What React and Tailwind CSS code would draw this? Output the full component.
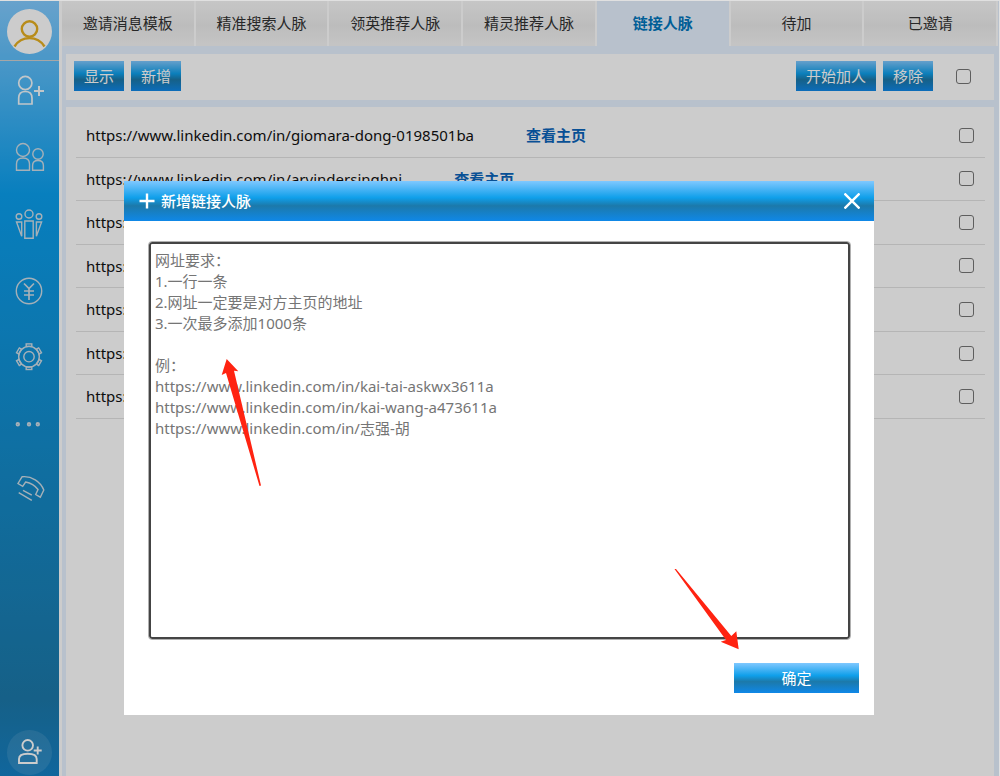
import React, { useState } from "react";

const tabs = [
  "邀请消息模板",
  "精准搜索人脉",
  "领英推荐人脉",
  "精灵推荐人脉",
  "链接人脉",
  "待加",
  "已邀请",
];

const links = [
  "https://www.linkedin.com/in/giomara-dong-0198501ba",
  "https://www.linkedin.com/in/arvindersinghni",
  "https://www.linkedin.com/in/",
  "https://www.linkedin.com/in/",
  "https://www.linkedin.com/in/",
  "https://www.linkedin.com/in/",
  "https://www.linkedin.com/in/",
];

const placeholder = `网址要求：
1.一行一条
2.网址一定要是对方主页的地址
3.一次最多添加1000条

例：
https://www.linkedin.com/in/kai-tai-askwx3611a
https://www.linkedin.com/in/kai-wang-a473611a
https://www.linkedin.com/in/志强-胡`;

const menu = [
  {
    label: "加人",
    active: true,
    icon: (
      <>
        <circle cx="25.3" cy="22" r="6.6" />
        <path d="M18.7 43V37Q18.7 30.5 25.3 30.5Q32 30.5 32 37V43Z" />
        <path d="M39 25V35M34 30H44" strokeWidth="2" />
      </>
    ),
  },
  {
    label: "人脉",
    icon: (
      <>
        <circle cx="23" cy="23" r="6.5" />
        <path d="M16.5 43.3V37Q16.5 31 23 31Q29.5 31 29.5 37V43.3Z" />
        <circle cx="38" cy="27" r="5.2" />
        <path d="M32.6 43.3V38.5Q32.6 33.5 38 33.5Q43.4 33.5 43.4 38.5V43.3Z" />
      </>
    ),
  },
  {
    label: "群组",
    icon: (
      <>
        <circle cx="29" cy="20" r="4" />
        <circle cx="19" cy="22.5" r="2.8" />
        <circle cx="39" cy="22.5" r="2.8" />
        <path d="M24.8 27H33.2V44.3H24.8ZM16.5 28H21.7V42.3ZM41.6 28H36.4V42.3Z" />
      </>
    ),
  },
  {
    label: "费用",
    icon: (
      <>
        <circle cx="29" cy="31" r="12.7" />
        <path
          d="M24 23.5L29 28.5L34 23.5M29 28.5V40M24 31H34M24 35H34"
          strokeWidth="1.7"
        />
      </>
    ),
  },
  {
    label: "设置",
    icon: (
      <>
        <circle cx="29" cy="30.7" r="10.3" />
        <circle cx="29" cy="30.7" r="5.2" />
        {[0, 60, 120, 180, 240, 300].map((deg) => (
          <rect
            key={deg}
            x="26.2"
            y="17.9"
            width="5.6"
            height="2.5"
            transform={`rotate(${deg} 29 30.7)`}
          />
        ))}
      </>
    ),
  },
  {
    label: "更多",
    icon: (
      <>
        <circle cx="17.8" cy="31.3" r="1.3" strokeWidth="1.8" />
        <circle cx="29" cy="31.3" r="1.3" strokeWidth="1.8" />
        <circle cx="37.8" cy="31.3" r="1.3" strokeWidth="1.8" />
      </>
    ),
  },
  {
    label: "联系",
    icon: (
      <>
        <path d="M22 17.8L18 24.5L22.7 27.3L25.6 23Q33.5 24.5 38 30.5L35.7 35.5L40.3 38.2L43.8 31C40.5 22.5 31.5 16.7 22 17.8Z" />
        <path d="M23 31.3L31.8 36.2M18.7 33.7L31.8 41.3" />
      </>
    ),
  },
];

const buttonStyle =
  "bg-[linear-gradient(to_bottom,#7fc8ff_0%,#0f9fea_42%,#1c79aa_62%,#0f88e8_100%)] text-white text-[15px] leading-[30px] h-[30px]";

const checkStyle =
  "appearance-none size-[15px] border border-[#767676] rounded-[3px] checked:bg-[#0f88e8]";

const Sidebar = () => (
  <aside className="w-[59px] shrink-0 flex flex-col items-center bg-[linear-gradient(to_bottom,#82cbff_0%,#0a9fee_25%,#1c79aa_90%,#1580c4_100%)]">
    <div className="w-full h-[60px] pt-2 flex justify-center items-start border-b border-[#d0d0d0]">
      <svg className="size-[45px]" viewBox="0 0 45 45" fill="none">
        <circle cx="22.5" cy="22.5" r="22.5" fill="#fff" />
        <g stroke="#e6b021" strokeWidth="2.4">
          <circle cx="22.5" cy="20" r="7.7" />
          <path d="M7.5 37.5A17.6 17.6 0 0 1 37.5 37.5" />
        </g>
      </svg>
    </div>

    <nav className="h-[458px] w-full flex flex-col justify-between">
      {menu.map((item) => (
        <button key={item.label} aria-label={item.label} className="h-[60px]">
          <svg
            className="w-[59px] h-[60px]"
            viewBox="0 0 59 60"
            fill="none"
            stroke={item.active ? "#f2f8fc" : "#d0dde6"}
            strokeWidth={item.active ? 1.7 : 1.4}
          >
            {item.icon}
          </svg>
        </button>
      ))}
    </nav>

    <button
      aria-label="添加联系人"
      className="mt-auto mb-px size-[45px] rounded-full bg-white/10"
    >
      <svg
        className="size-[45px]"
        viewBox="0 0 45 45"
        fill="none"
        stroke="#fff"
        strokeWidth="1.9"
      >
        <circle cx="20.7" cy="15.3" r="5.3" />
        <path d="M12 33V29Q12 23.7 20.7 23.7Q29.7 23.7 29.7 29V33Z" />
        <path d="M30.7 16.5V24.5M26.7 20.5H34.7" />
      </svg>
    </button>
  </aside>
);

const AddLinkModal = ({ onClose }) => {
  const [text, setText] = useState("");

  return (
    <div className="absolute inset-0 bg-black/20 flex justify-center items-start pt-[180px] pr-px">
      <div
        role="dialog"
        aria-label="新增链接人脉"
        className="relative w-[750px] bg-white"
      >
        <div className="h-10 pl-[15px] pr-[14px] flex items-center text-white bg-[linear-gradient(to_bottom,#7fc8ff_0%,#0f9fea_42%,#1c79aa_62%,#0f88e8_100%)]">
          <svg
            className="size-4 mr-1.5"
            viewBox="0 0 16 16"
            stroke="currentColor"
            strokeWidth="2.4"
          >
            <path d="M8 .5V15.5M.5 8H15.5" />
          </svg>
          <h2 className="text-[15px] font-medium">新增链接人脉</h2>
          <button aria-label="关闭" className="ml-auto" onClick={onClose}>
            <svg
              className="size-4"
              viewBox="0 0 16 16"
              stroke="currentColor"
              strokeWidth="2.4"
            >
              <path d="M.5 .5L15.5 15.5M15.5 .5L.5 15.5" />
            </svg>
          </button>
        </div>

        <div className="pt-5 pl-6 pr-[23px]">
          <textarea
            aria-label="网址"
            value={text}
            onChange={(e) => setText(e.target.value)}
            placeholder={placeholder}
            className="block w-full h-[399px] resize-none rounded-[4px] border border-[#b0b0b0] ring-2 ring-inset ring-[#444] px-1.5 pt-2 text-[15px] leading-[21px] placeholder:text-[#757575] outline-none"
          />
        </div>

        <div className="pt-[23px] pb-[22px] pr-[15px] flex justify-end">
          <button className={`${buttonStyle} w-[125px]`}>确定</button>
        </div>

        {/* hint arrows */}
        <svg
          className="absolute inset-0 w-full h-full pointer-events-none"
          viewBox="0 0 750 534"
          fill="#ff2311"
        >
          <path d="M102.7 178L97.7 194L102 192L135.5 305L137 304.5L110 189.7L114.3 190.3Z" />
          <path d="M550.5 388L552 388L607.3 455L612.3 450.3L614.7 468.3L596.7 460.7L602 459Z" />
        </svg>
      </div>
    </div>
  );
};

const App = () => {
  const [open, setOpen] = useState(true);
  const [current, setCurrent] = useState(4);

  return (
    <div className="relative flex min-h-screen border-t border-r border-[#e0e0e0] bg-[#e6f2ff] font-['Noto_Sans','Noto_Sans_CJK_SC',sans-serif] text-[15px] text-[#111]">
      <Sidebar />

      <main className="flex-1 min-w-0 flex flex-col border-l-[3px] border-white">
        <div className="flex h-[45px] pr-px">
          {tabs.map((tab, index) => (
            <button
              key={tab}
              onClick={() => setCurrent(index)}
              className={
                index === current
                  ? "flex-1 border-r-2 border-white font-bold text-[#0076bd]"
                  : "flex-1 border-r-2 border-white text-[#333] bg-[linear-gradient(to_bottom,#f8f8f8_0%,#ececec_55%,#f6f6f6_100%)]"
              }
            >
              {tab}
            </button>
          ))}
        </div>

        <div className="flex-1 flex flex-col gap-[7px] pt-2 pl-1 pr-[5px]">
          <div className="h-[46px] px-2 pt-[7px] flex items-start bg-white">
            <button className={`${buttonStyle} w-[50px] mr-[7px]`}>
              显示
            </button>
            <button
              className={`${buttonStyle} w-[50px]`}
              onClick={() => setOpen(true)}
            >
              新增
            </button>
            <button className={`${buttonStyle} w-20 ml-auto mr-[7px]`}>
              开始加人
            </button>
            <button className={`${buttonStyle} w-[50px]`}>移除</button>
            <input
              type="checkbox"
              aria-label="全选"
              className={`${checkStyle} mt-2 ml-[23px] mr-[15px]`}
            />
          </div>

          <div className="flex-1 bg-white pt-[7px] pl-[10px] pr-[9px]">
            <ul className="grid grid-rows-7 h-[305px]">
              {links.map((link, index) => (
                <li
                  key={index}
                  className="flex items-center pl-[10px] pr-[11px] border-b border-[#e3e3e3]"
                >
                  <span>{link}</span>
                  <a href="#" className="ml-[52px] font-bold text-[#0a64bb]">
                    查看主页
                  </a>
                  <input
                    type="checkbox"
                    aria-label="选择"
                    className={`${checkStyle} ml-auto`}
                  />
                </li>
              ))}
            </ul>
          </div>
        </div>
      </main>

      {open && <AddLinkModal onClose={() => setOpen(false)} />}
    </div>
  );
};

export default App;
